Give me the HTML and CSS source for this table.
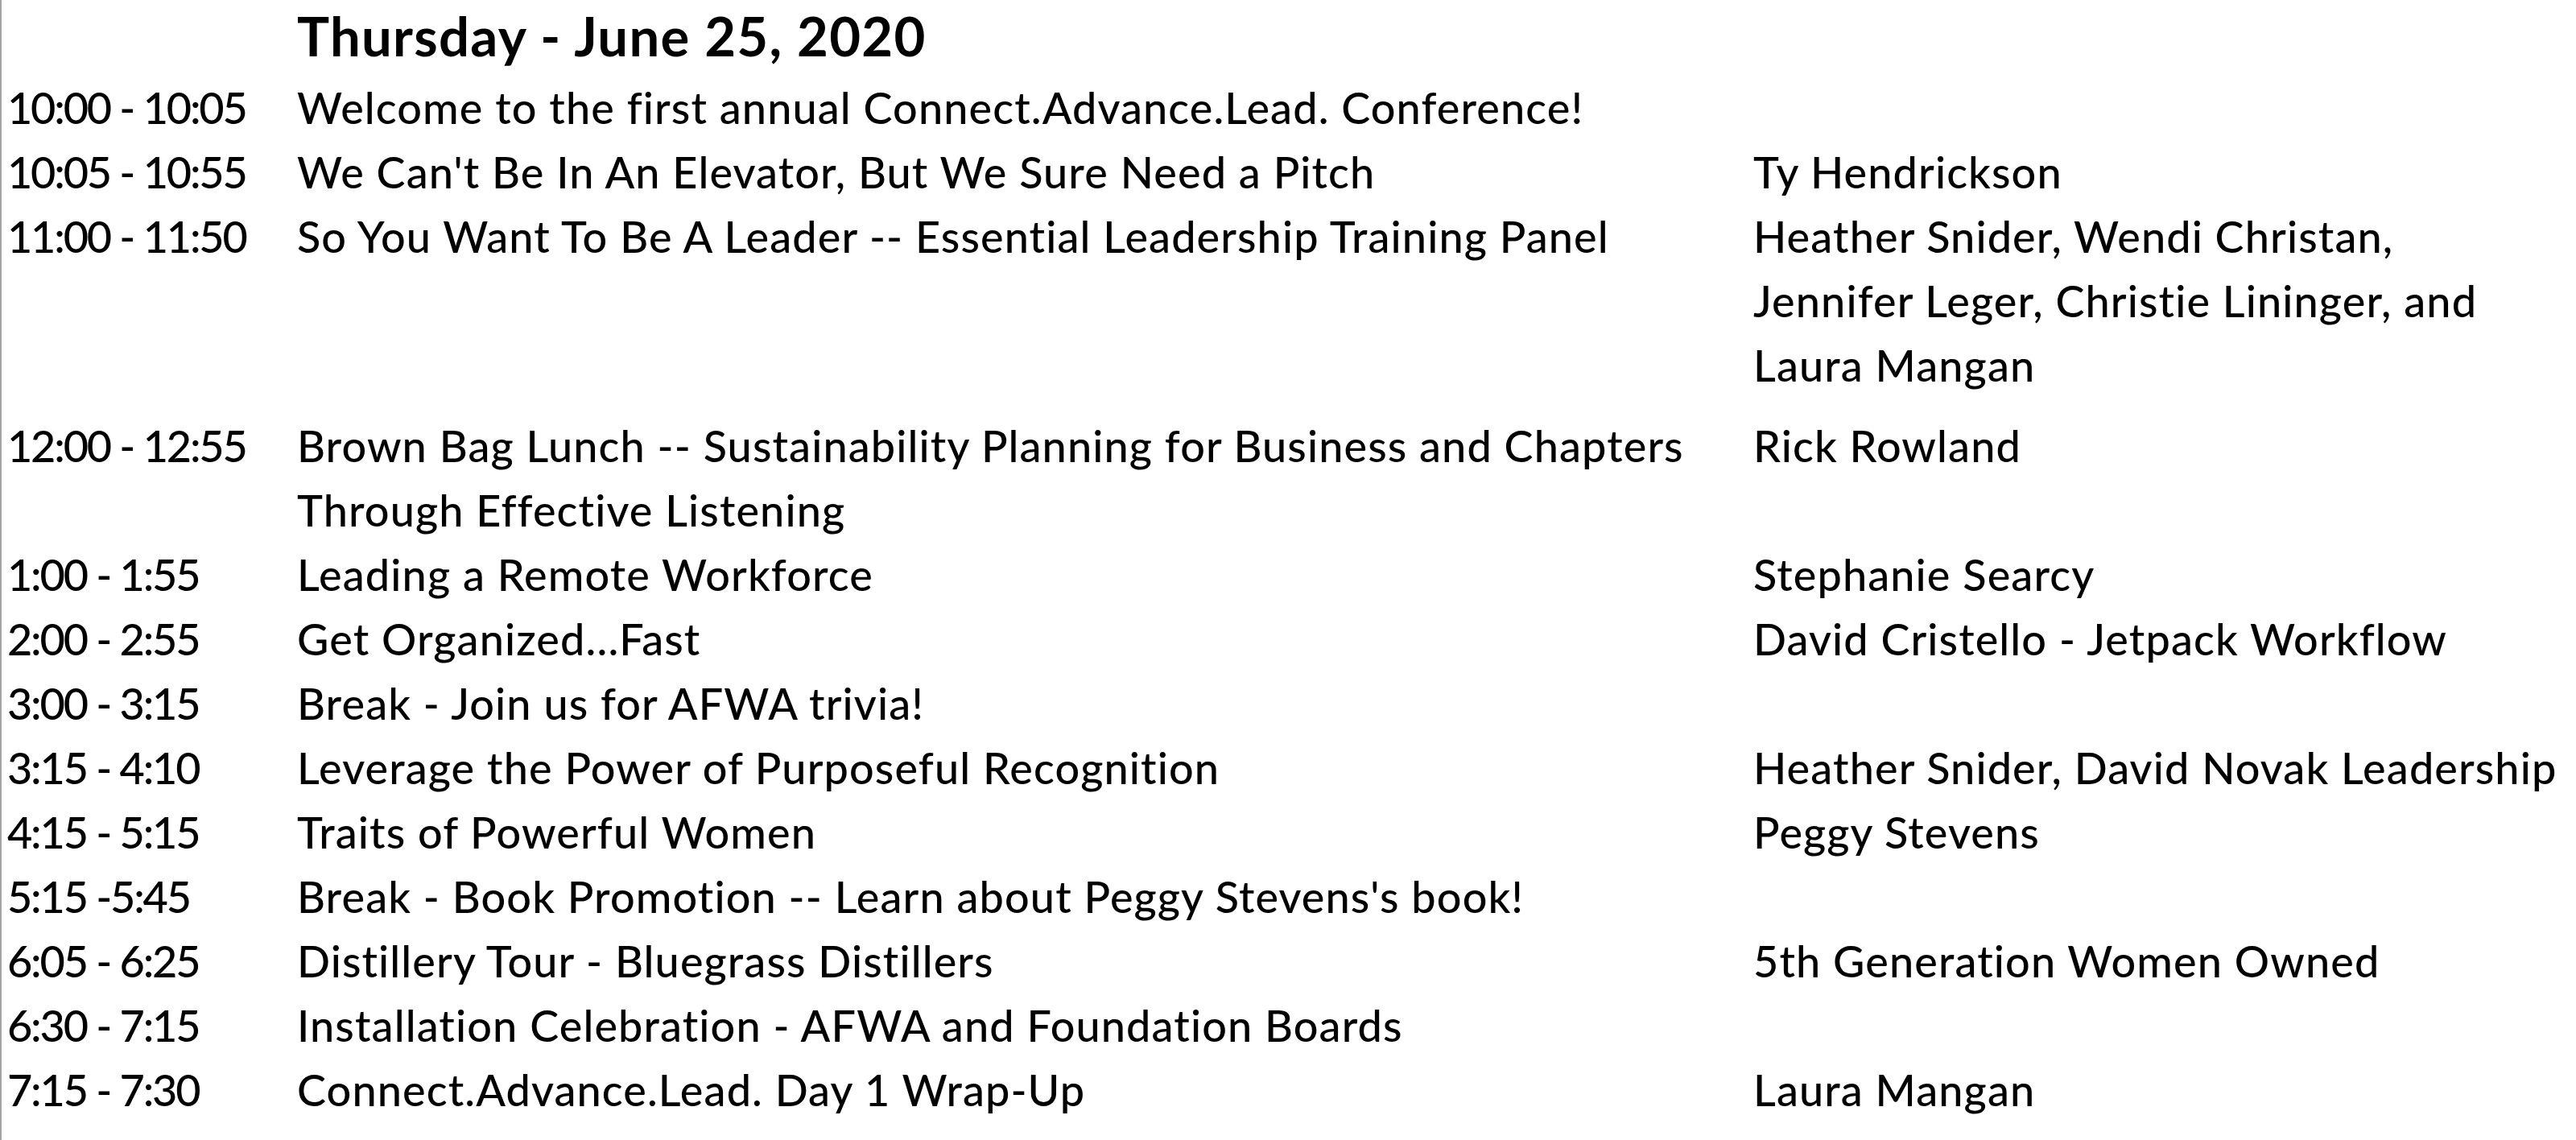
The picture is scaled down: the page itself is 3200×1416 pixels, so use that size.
FILE: index.html
```html
<!DOCTYPE html>
<html lang="en">
<head>
<meta charset="utf-8">
<title>Thursday - June 25, 2020</title>
<link rel="stylesheet" href="styles.css">
</head>
<body>
<div class="page">
  <div class="agenda">
    <h1 class="day">Thursday - June 25, 2020</h1>
    <div class="row">
      <div class="time">10:00 - 10:05</div>
      <div class="session">Welcome to the first annual Connect.Advance.Lead. Conference!</div>
      <div class="speaker"></div>
    </div>
    <div class="row">
      <div class="time">10:05 - 10:55</div>
      <div class="session">We Can't Be In An Elevator, But We Sure Need a Pitch</div>
      <div class="speaker">Ty Hendrickson</div>
    </div>
    <div class="row row-spaced">
      <div class="time">11:00 - 11:50</div>
      <div class="session">So You Want To Be A Leader -- Essential Leadership Training Panel</div>
      <div class="speaker">Heather Snider, Wendi Christan,<br>Jennifer Leger, Christie Lininger, and<br>Laura Mangan</div>
    </div>
    <div class="row">
      <div class="time">12:00 - 12:55</div>
      <div class="session">Brown Bag Lunch -- Sustainability Planning for Business and Chapters<br>Through Effective Listening</div>
      <div class="speaker">Rick Rowland</div>
    </div>
    <div class="row">
      <div class="time">1:00 - 1:55</div>
      <div class="session">Leading a Remote Workforce</div>
      <div class="speaker">Stephanie Searcy</div>
    </div>
    <div class="row">
      <div class="time">2:00 - 2:55</div>
      <div class="session">Get Organized…Fast</div>
      <div class="speaker">David Cristello - Jetpack Workflow</div>
    </div>
    <div class="row">
      <div class="time">3:00 - 3:15</div>
      <div class="session">Break - Join us for AFWA trivia!</div>
      <div class="speaker"></div>
    </div>
    <div class="row">
      <div class="time">3:15 - 4:10</div>
      <div class="session">Leverage the Power of Purposeful Recognition</div>
      <div class="speaker">Heather Snider, David Novak Leadership</div>
    </div>
    <div class="row">
      <div class="time">4:15 - 5:15</div>
      <div class="session">Traits of Powerful Women</div>
      <div class="speaker">Peggy Stevens</div>
    </div>
    <div class="row">
      <div class="time">5:15 -5:45</div>
      <div class="session">Break - Book Promotion -- Learn about Peggy Stevens's book!</div>
      <div class="speaker"></div>
    </div>
    <div class="row">
      <div class="time">6:05 - 6:25</div>
      <div class="session">Distillery Tour - Bluegrass Distillers</div>
      <div class="speaker">5th Generation Women Owned</div>
    </div>
    <div class="row">
      <div class="time">6:30 - 7:15</div>
      <div class="session">Installation Celebration - AFWA and Foundation Boards</div>
      <div class="speaker"></div>
    </div>
    <div class="row">
      <div class="time">7:15 - 7:30</div>
      <div class="session">Connect.Advance.Lead. Day 1 Wrap-Up</div>
      <div class="speaker">Laura Mangan</div>
    </div>
  </div>
</div>
</body>
</html>
```
FILE: styles.css
```css
html, body {
  margin: 0;
  padding: 0;
  background: #ffffff;
}

body {
  font-family: "Lato", "Liberation Sans", sans-serif;
  color: #000000;
}

.page {
  min-height: 1416px;
  box-sizing: border-box;
  border-left: 2px solid #a3a3a3;
  padding-left: 7px;
}

.agenda {
  display: flex;
  flex-direction: column;
}

.day {
  margin: 4px 0 10px 360px;
  font-size: 67px;
  line-height: 80px;
  font-weight: 700;
  letter-spacing: 1.3px;
  white-space: nowrap;
}

.row {
  display: grid;
  grid-template-columns: 360px 1809px 1fr;
  font-size: 54px;
  font-weight: 500;
  line-height: 80px;
  letter-spacing: 1.1px;
  white-space: nowrap;
}

.row-spaced {
  padding-bottom: 20px;
}

.time {
  letter-spacing: -2.2px;
}
```
